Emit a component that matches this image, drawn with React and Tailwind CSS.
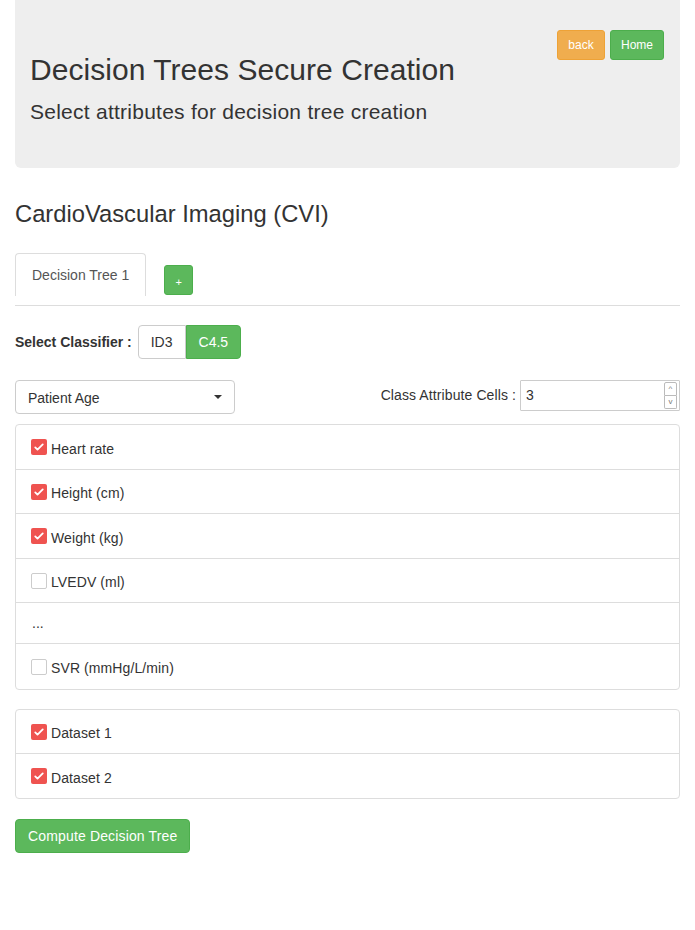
import React from 'react';

const font = { fontFamily: '"Liberation Sans", Arial, sans-serif' };

function Check({ checked }) {
  if (!checked) {
    return <span className="inline-block w-4 h-4 rounded-[2px] border border-[#ccc] bg-white shrink-0" />;
  }
  return (
    <span className="inline-flex items-center justify-center w-4 h-4 rounded-[2px] bg-[#ef5350] shrink-0">
      <svg viewBox="0 0 16 16" className="w-3 h-3">
        <path d="M3 8.5l3 3 7-7" fill="none" stroke="white" strokeWidth="2.4" strokeLinecap="round" strokeLinejoin="round" />
      </svg>
    </span>
  );
}

function Row({ label, checked, plain, last, h = 'h-[44px]' }) {
  return (
    <div className={`flex items-center gap-[4px] pl-[15px] pr-4 ${h} ${last ? '' : 'border-b border-[#ddd]'}`}>
      {plain ? <span className="text-[14px] text-[#333] pl-[1px]">{label}</span> : (
        <>
          <Check checked={checked} />
          <span className="text-[14px] text-[#333] pt-[4px] tracking-[0.1px]">{label}</span>
        </>
      )}
    </div>
  );
}

export default function App() {
  return (
    <div className="w-[695px] min-h-[930px] bg-white px-[15px] text-[#333]" style={font}>
      <div className="h-[168px] bg-[#eee] rounded-b-[6px] px-[15px] flex">
        <div className="flex-1 pt-[52px]">
          <h1 className="text-[30px] leading-[36px] text-[#333] tracking-[0.05px]">Decision Trees Secure Creation</h1>
          <p className="text-[21px] leading-[30px] mt-[9px] tracking-[0.25px]">Select attributes for decision tree creation</p>
        </div>
        <div className="flex gap-[5px] pt-[30px] pr-[1px]">
          <button className="h-[30px] w-[48px] rounded-[3px] bg-[#f0ad4e] border border-[#eea236] text-white text-[12px]">back</button>
          <button className="h-[30px] w-[54px] rounded-[3px] bg-[#5cb85c] border border-[#4cae4c] text-white text-[12px]">Home</button>
        </div>
      </div>

      <h2 className="text-[23.75px] leading-[30px] mt-[31px]">CardioVascular Imaging (CVI)</h2>

      <div className="mt-[25px] flex items-end border-b border-[#ddd] h-[52px]">
        <div className="h-[43px] px-[16px] mb-[9px] border border-[#ddd] border-b-0 rounded-t-[4px] flex items-center text-[14px] text-[#555] bg-white">Decision Tree 1</div>
        <button className="ml-[18px] mb-[10px] w-[29px] h-[30px] rounded-[3px] bg-[#5cb85c] border border-[#4cae4c] text-white text-[11px] leading-none pt-[4px]">+</button>
      </div>

      <div className="mt-[19px] flex items-center">
        <span className="text-[14px] font-bold mr-[6px]">Select Classifier :</span>
        <div className="flex">
          <span className="h-[34px] px-[12px] flex items-center border border-[#ccc] rounded-l-[4px] text-[14px]">ID3</span>
          <span className="h-[34px] px-[12px] flex items-center bg-[#5cb85c] border border-[#4cae4c] rounded-r-[4px] text-white text-[14px]">C4.5</span>
        </div>
      </div>

      <div className="mt-[21px] flex items-start justify-between">
        <div className="w-[220px] h-[34px] border border-[#ccc] rounded-[4px] flex items-center justify-between pl-[12px] pr-[12px] text-[14px] pt-[3px]">
          <span>Patient Age</span>
          <span className="w-0 h-0 border-l-[4px] border-r-[4px] border-t-[4px] border-l-transparent border-r-transparent border-t-[#333] -mt-[4px]" />
        </div>
        <div className="flex items-center">
          <span className="text-[14px] mr-[4px] tracking-[0.1px]">Class Attribute Cells :</span>
          <div className="w-[160px] h-[31px] border border-[#ccc] rounded-[1px] flex items-center justify-between pl-[5px] pr-[2px] text-[14px]">
            <span>3</span>
            <div className="flex flex-col w-[13px] h-[27px]">
              <span className="flex-1 border border-[#bbb] rounded-t-[2px] text-[8px] leading-none flex items-center justify-center text-[#777]">^</span>
              <span className="flex-1 border border-t-0 border-[#bbb] rounded-b-[2px] text-[8px] leading-none flex items-center justify-center text-[#777]">v</span>
            </div>
          </div>
        </div>
      </div>

      <div className="mt-[10px] border border-[#ddd] rounded-[4px]">
        <Row label="Heart rate" checked h="h-[45px]" />
        <Row label="Height (cm)" checked />
        <Row label="Weight (kg)" checked h="h-[45px]" />
        <Row label="LVEDV (ml)" />
        <Row label="..." plain h="h-[41px]" />
        <Row label="SVR (mmHg/L/min)" last h="h-[45px]" />
      </div>

      <div className="mt-[19px] border border-[#ddd] rounded-[4px]">
        <Row label="Dataset 1" checked />
        <Row label="Dataset 2" checked last />
      </div>

      <button className="mt-[20px] h-[34px] px-[12px] rounded-[4px] bg-[#5cb85c] border border-[#4cae4c] text-white text-[14px] tracking-[0.15px]">Compute Decision Tree</button>
    </div>
  );
}
